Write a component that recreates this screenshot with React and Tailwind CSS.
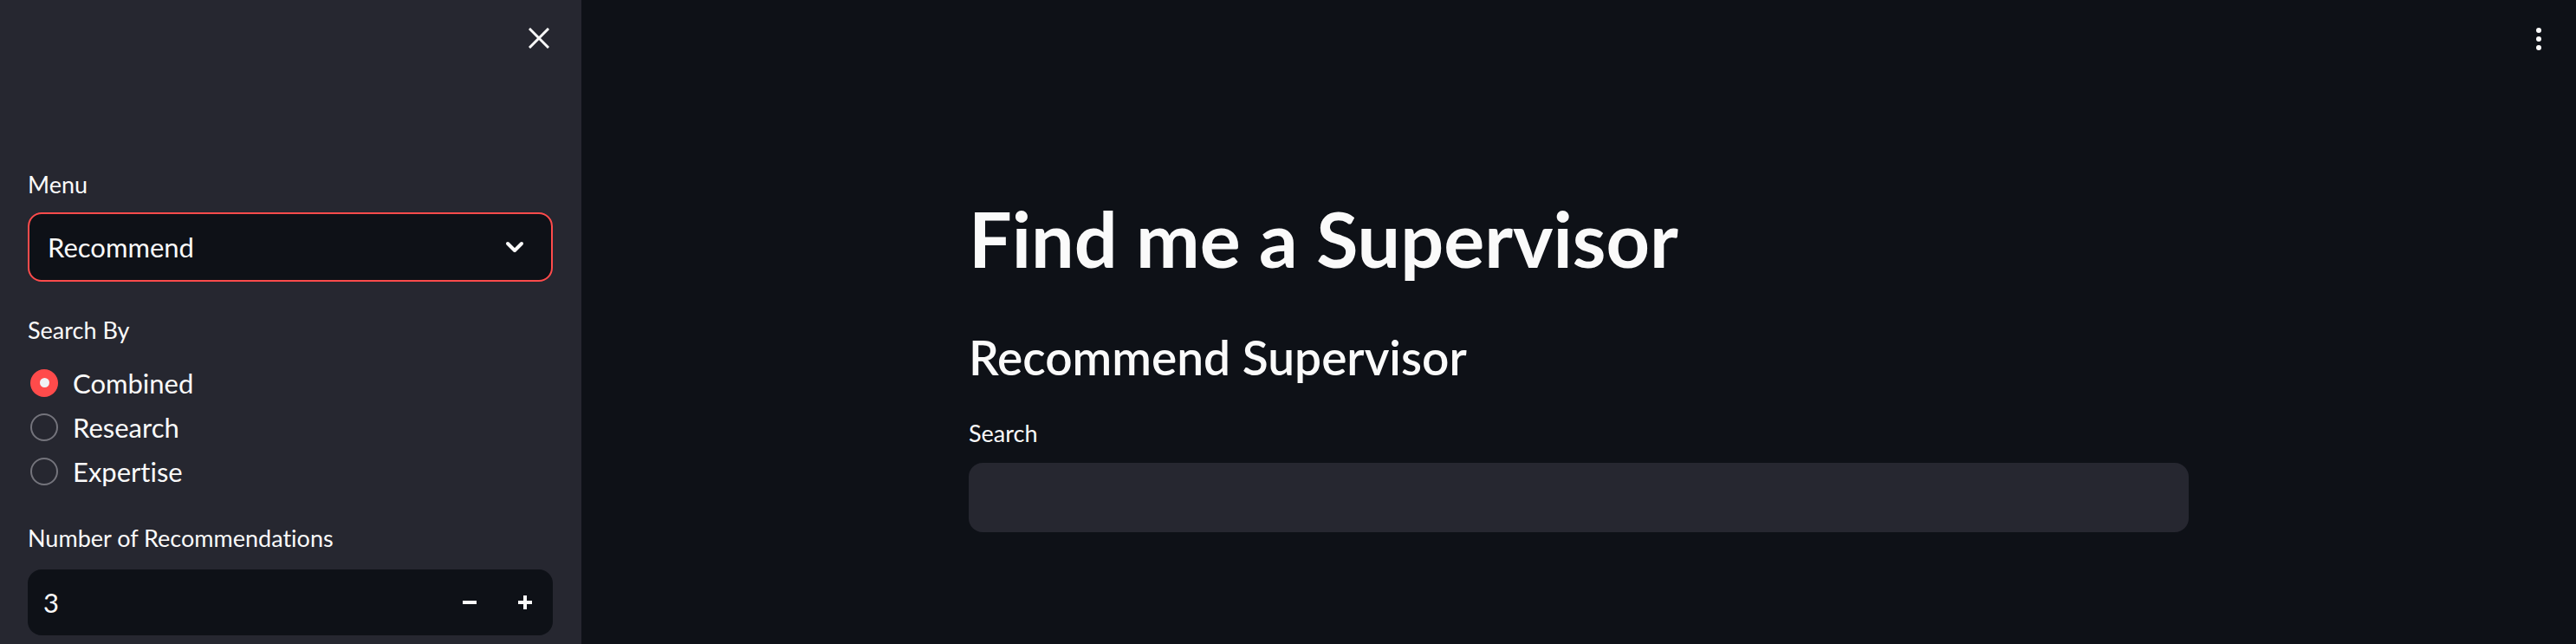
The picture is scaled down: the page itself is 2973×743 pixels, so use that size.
import React, { useState } from 'react';

const OPTIONS = ['Combined', 'Research', 'Expertise'];

const CloseIcon = () => (
    <svg width="24" height="24" viewBox="0 0 24 24" fill="none" stroke="#fafafa" strokeWidth="3" strokeLinecap="square">
        <line x1="2" y1="2" x2="22" y2="22" />
        <line x1="22" y1="2" x2="2" y2="22" />
    </svg>
);

const Chevron = () => (
    <svg width="22" height="14" viewBox="0 0 22 14" fill="none" stroke="#fafafa" strokeWidth="4" strokeLinecap="round" strokeLinejoin="round">
        <polyline points="3,3 11,11 19,3" />
    </svg>
);

const Radio = ({ label, checked, onClick }) => (
    <button onClick={onClick} className="flex items-center h-[51px] w-full text-left">
        {checked ? (
            <span className="w-8 h-8 rounded-full bg-[#ff4b4b] flex items-center justify-center ml-[3px]">
                <span className="w-[11px] h-[11px] rounded-full bg-[#f0f2f6]"></span>
            </span>
        ) : (
            <span className="w-8 h-8 rounded-full border-2 border-[#74747c] ml-[3px]"></span>
        )}
        <span className="ml-[17px] text-[31px] leading-[38px] text-[#fafafa]">{label}</span>
    </button>
);

export default function App() {
    const [searchBy, setSearchBy] = useState('Combined');
    const [count, setCount] = useState(3);

    return (
        <div className="flex h-[743px] w-full overflow-hidden bg-[#0e1117] font-['Lato',sans-serif] [font-variant-ligatures:none] text-[#fafafa]">
            {/* Sidebar */}
            <aside className="w-[671px] shrink-0 bg-[#262730] pl-8 pr-[33px]">
                <div className="flex justify-end h-[194px] pt-8 pr-[4px]">
                    <button className="w-[24px] h-[24px]"><CloseIcon /></button>
                </div>

                <label className="block h-10 leading-[38px] text-[27px]">Menu</label>
                <div className="mt-[11px] h-20 rounded-2xl border-2 border-[#ff4b4b] bg-[#0e1117] flex items-center justify-between pl-[21px] pr-[31px]">
                    <span className="text-[31px]">Recommend</span>
                    <Chevron />
                </div>

                <label className="block mt-[37px] h-10 leading-[38px] text-[27px]">Search By</label>
                <div className="mt-[14px] flex flex-col">
                    {OPTIONS.map((opt) => (
                        <Radio key={opt} label={opt} checked={searchBy === opt} onClick={() => setSearchBy(opt)} />
                    ))}
                </div>

                <label className="block mt-[33px] h-10 leading-[38px] text-[27px]">Number of Recommendations</label>
                <div className="mt-[15px] h-[76px] rounded-2xl bg-[#0e1117] flex items-center">
                    <span className="flex-1 pl-[18px] text-[31px]">{count}</span>
                    <button onClick={() => setCount((c) => Math.max(1, c - 1))} className="w-16 h-full flex items-center justify-center">
                        <span className="block w-4 h-[4px] bg-[#fafafa]"></span>
                    </button>
                    <button onClick={() => setCount((c) => c + 1)} className="w-16 h-full flex items-center justify-center">
                        <span className="relative block w-4 h-4">
                            <span className="absolute left-0 top-[6px] w-4 h-[4px] bg-[#fafafa]"></span>
                            <span className="absolute top-0 left-[6px] w-[4px] h-4 bg-[#fafafa]"></span>
                        </span>
                    </button>
                </div>
            </aside>

            {/* Main */}
            <main className="relative flex-1">
                <button className="absolute top-[28px] right-[36px] flex flex-col gap-[4px] p-1">
                    <span className="w-[6px] h-[6px] rounded-full bg-[#fafafa]"></span>
                    <span className="w-[6px] h-[6px] rounded-full bg-[#fafafa]"></span>
                    <span className="w-[6px] h-[6px] rounded-full bg-[#fafafa]"></span>
                </button>

                <div className="w-[1408px] mx-auto pt-[225px]">
                    <h1 className="h-[100px] leading-[100px] text-[88px] font-bold">Find me a Supervisor</h1>
                    <h3 className="mt-[57px] h-[60px] leading-[60px] text-[55px] font-semibold">Recommend Supervisor</h3>
                    <label className="block mt-[39px] h-10 leading-[38px] text-[27px]">Search</label>
                    <div className="mt-[13px] h-20 rounded-2xl bg-[#262730]"></div>
                </div>
            </main>
        </div>
    );
}
